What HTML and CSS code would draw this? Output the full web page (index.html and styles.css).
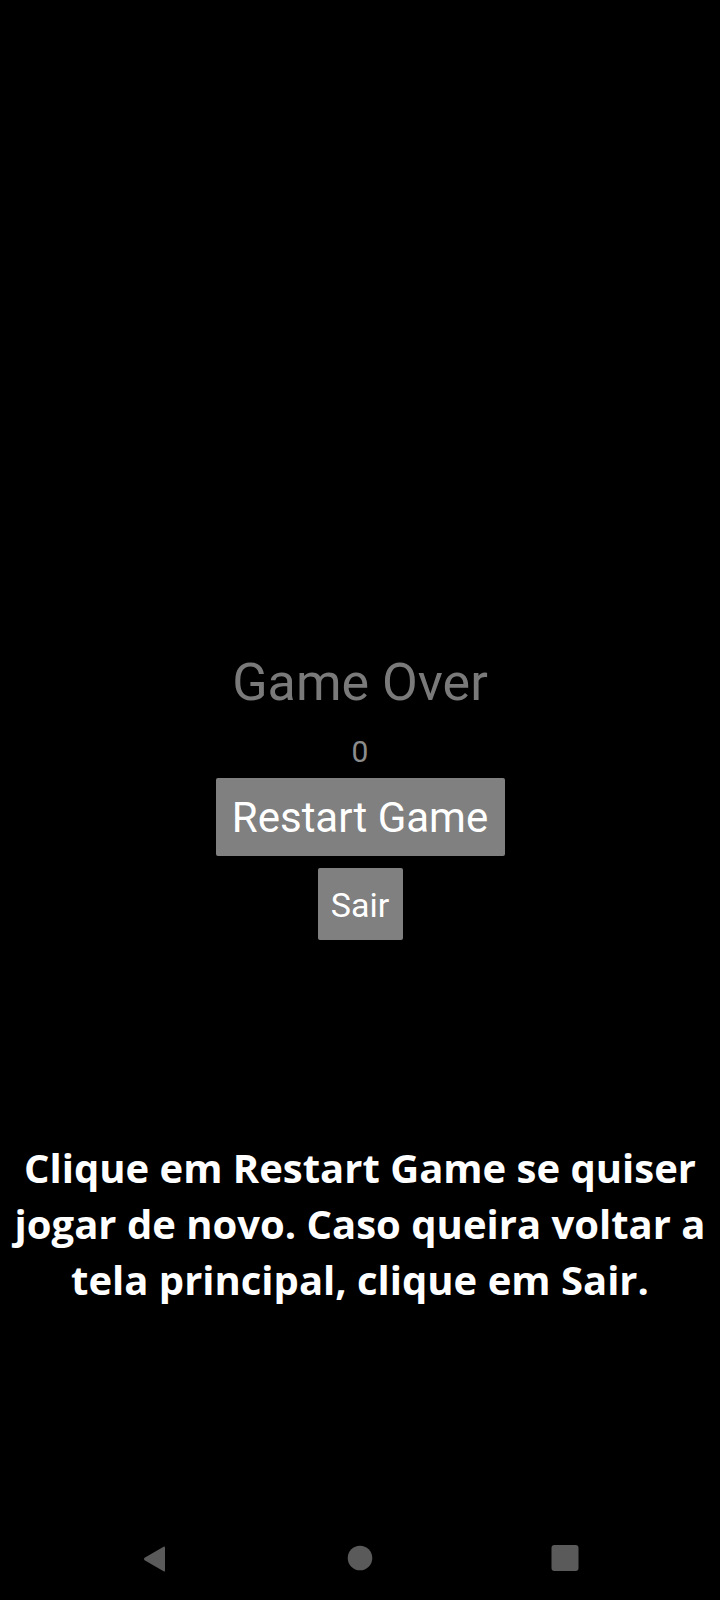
FILE: index.html
```html
<!DOCTYPE html>
<html lang="pt">
<head>
<meta charset="utf-8">
<title>Game Over</title>
<link rel="stylesheet" href="styles.css">
</head>
<body>
<div class="screen">
  <main class="game">
    <div class="title">Game Over</div>
    <div class="score">0</div>
    <button class="btn btn-restart">Restart Game</button>
    <button class="btn btn-exit">Sair</button>
  </main>
  <p class="hint">Clique em Restart Game se quiser jogar de novo. Caso queira voltar a tela principal, clique em Sair.</p>
  <nav class="navbar">
    <span class="nav-item">
      <svg width="28" height="28" viewBox="0 0 28 28"><path d="M24 3.5 L24 26.5 Q24 28 22.6 27.2 L3.6 16.2 Q2 15 3.6 13.8 L22.6 2.8 Q24 2 24 3.5 Z" fill="#5a5a5a"/></svg>
    </span>
    <span class="nav-item">
      <svg width="28" height="28" viewBox="0 0 28 28"><circle cx="14" cy="14" r="12.3" fill="#5a5a5a"/></svg>
    </span>
    <span class="nav-item">
      <svg width="28" height="28" viewBox="0 0 28 28"><rect x="0.5" y="1" width="27" height="26" rx="3" fill="#5a5a5a"/></svg>
    </span>
  </nav>
</div>
</body>
</html>
```
FILE: styles.css
```css
html, body {
  margin: 0;
  padding: 0;
  background: #000;
}

.screen {
  width: 720px;
  height: 1600px;
  display: flex;
  flex-direction: column;
  align-items: center;
  overflow: hidden;
}

.game {
  display: flex;
  flex-direction: column;
  align-items: center;
  padding-top: 653px;
  font-family: Roboto, "Noto Sans", sans-serif;
}

.title {
  font-size: 52px;
  line-height: 60px;
  color: #7a7a7a;
}

.score {
  margin-top: 21px;
  font-size: 30px;
  line-height: 36px;
  color: #8c8c8c;
}

.btn {
  border: 0;
  margin: 0;
  background: #808080;
  color: #fff;
  font-family: Roboto, "Noto Sans", sans-serif;
  border-radius: 2px;
}

.btn-restart {
  margin-top: 8px;
  width: 289px;
  padding: 2px 0 0;
  font-size: 42px;
  line-height: 76px;
}

.btn-exit {
  margin-top: 12px;
  width: 85px;
  padding: 2px 0 0;
  font-size: 34px;
  line-height: 70px;
}

.hint {
  margin: 200px 0 0;
  padding: 0 10px;
  width: 700px;
  text-align: center;
  color: #fff;
  font-family: "Open Sans", "Noto Sans", sans-serif;
  font-weight: 700;
  font-size: 40px;
  line-height: 56px;
}

.navbar {
  margin-top: auto;
  margin-bottom: 14px;
  height: 56px;
  display: flex;
  align-items: center;
  justify-content: center;
  gap: 177px;
}

.nav-item {
  width: 28px;
  height: 28px;
  display: flex;
}

.nav-item svg {
  display: block;
}
```
